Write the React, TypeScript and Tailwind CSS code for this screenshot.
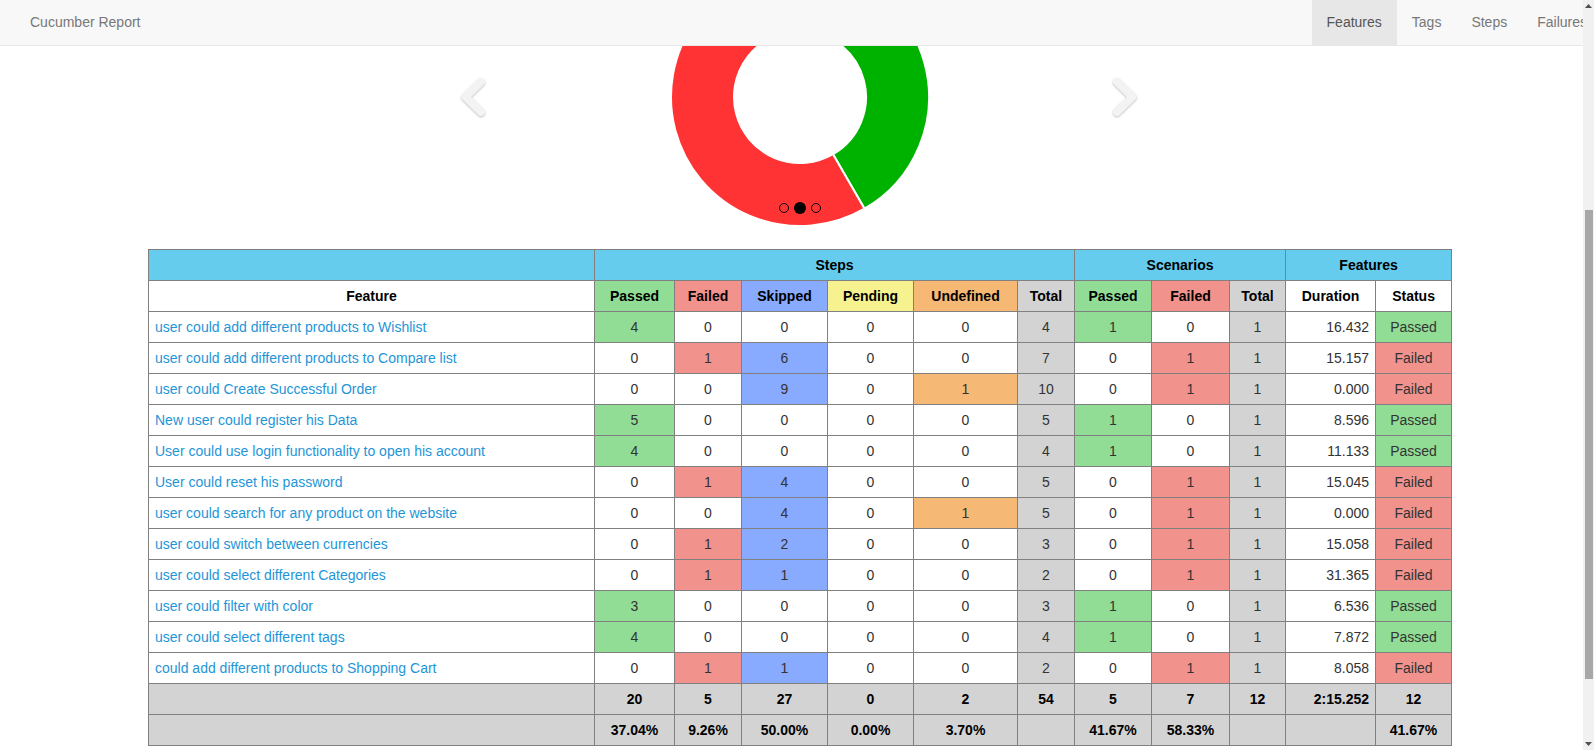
import React from "react";

type Row = {
  name: string;
  steps: number[];
  scenarios: number[];
  duration: string;
  status: "Passed" | "Failed";
};

const rows: Row[] = [
  { name: "user could add different products to Wishlist", steps: [4, 0, 0, 0, 0, 4], scenarios: [1, 0, 1], duration: "16.432", status: "Passed" },
  { name: "user could add different products to Compare list", steps: [0, 1, 6, 0, 0, 7], scenarios: [0, 1, 1], duration: "15.157", status: "Failed" },
  { name: "user could Create Successful Order", steps: [0, 0, 9, 0, 1, 10], scenarios: [0, 1, 1], duration: "0.000", status: "Failed" },
  { name: "New user could register his Data", steps: [5, 0, 0, 0, 0, 5], scenarios: [1, 0, 1], duration: "8.596", status: "Passed" },
  { name: "User could use login functionality to open his account", steps: [4, 0, 0, 0, 0, 4], scenarios: [1, 0, 1], duration: "11.133", status: "Passed" },
  { name: "User could reset his password", steps: [0, 1, 4, 0, 0, 5], scenarios: [0, 1, 1], duration: "15.045", status: "Failed" },
  { name: "user could search for any product on the website", steps: [0, 0, 4, 0, 1, 5], scenarios: [0, 1, 1], duration: "0.000", status: "Failed" },
  { name: "user could switch between currencies", steps: [0, 1, 2, 0, 0, 3], scenarios: [0, 1, 1], duration: "15.058", status: "Failed" },
  { name: "user could select different Categories", steps: [0, 1, 1, 0, 0, 2], scenarios: [0, 1, 1], duration: "31.365", status: "Failed" },
  { name: "user could filter with color", steps: [3, 0, 0, 0, 0, 3], scenarios: [1, 0, 1], duration: "6.536", status: "Passed" },
  { name: "user could select different tags", steps: [4, 0, 0, 0, 0, 4], scenarios: [1, 0, 1], duration: "7.872", status: "Passed" },
  { name: "could add different products to Shopping Cart", steps: [0, 1, 1, 0, 0, 2], scenarios: [0, 1, 1], duration: "8.058", status: "Failed" },
];

// colour per step column, used only when the count is above zero
const stepColors = ["bg-[#92dd96]", "bg-[#f2928c]", "bg-[#88aaff]", "bg-[#f5f28f]", "bg-[#f5b975]"];
const scenarioColors = ["bg-[#92dd96]", "bg-[#f2928c]"];

const cell = "border border-[#808080] h-[31px] px-[5px] text-center";
const head = "border border-[#808080] h-[31px] px-[5px] text-center font-bold text-black";
const foot = "border border-[#808080] h-[31px] px-[5px] text-center font-bold text-black bg-[#d3d3d3]";

const colWidths = [446, 80, 67, 86, 86, 104, 57, 77, 78, 56, 90, 76];

function Chevron({ dir }: { dir: "left" | "right" }) {
  const pts = dir === "left" ? "25,10 9.5,25 25,40" : "9,10 24.5,25 9,40";
  return (
    <svg
      width="34"
      height="50"
      viewBox="0 0 34 50"
      className={`absolute top-[26px] ${dir === "left" ? "left-[456px]" : "left-[1108px]"} drop-shadow-[0_1px_1px_rgba(0,0,0,0.25)]`}
    >
      <polyline points={pts} fill="none" stroke="#f3f3f3" strokeWidth="8" strokeLinecap="round" strokeLinejoin="round" />
    </svg>
  );
}

function Donut() {
  return (
    <svg width="260" height="260" viewBox="0 0 260 260" className="block ml-[670px] mt-[-79px]">
      <path
        d="M130 1 A129 129 0 0 1 194.5 241.72 L163 187.16 A66 66 0 0 0 130 64 Z"
        fill="#00b200"
        stroke="#fff"
        strokeWidth="2"
      />
      <path
        d="M194.5 241.72 A129 129 0 1 1 130 1 L130 64 A66 66 0 1 0 163 187.16 Z"
        fill="#ff3333"
        stroke="#fff"
        strokeWidth="2"
      />
    </svg>
  );
}

export default function App() {
  return (
    <div className="flex h-[750px] w-full overflow-hidden bg-white font-['Liberation_Sans',Arial,sans-serif] text-[14px] text-[#333]">
      <div className="flex min-w-0 flex-1 flex-col overflow-hidden">
        {/* navbar */}
        <nav className="flex h-[46px] shrink-0 overflow-hidden border-b border-[#e7e7e7] bg-[#f8f8f8] text-[#777]">
          <span className="flex items-center pl-[30px]">Cucumber Report</span>
          <ul className="ml-auto mr-[-19px] flex shrink-0">
            <li className="flex items-center bg-[#e7e7e7] px-[15px] text-[#555]">Features</li>
            <li className="flex items-center px-[15px]">Tags</li>
            <li className="flex items-center px-[15px]">Steps</li>
            <li className="flex items-center px-[15px]">Failures</li>
          </ul>
        </nav>

        {/* chart carousel */}
        <div className="relative h-[203px] shrink-0 overflow-hidden">
          <Donut />
          <Chevron dir="left" />
          <Chevron dir="right" />
          <div className="absolute left-[779px] top-[156px] flex items-center gap-[5px]">
            <span className="h-[10px] w-[10px] rounded-full border border-black" />
            <span className="h-[12px] w-[12px] rounded-full bg-black" />
            <span className="h-[10px] w-[10px] rounded-full border border-black" />
          </div>
        </div>

        {/* features table */}
        <table className="ml-[148px] w-[1304px] shrink-0 table-fixed border-collapse">
          <colgroup>
            {colWidths.map((w, i) => (
              <col key={i} style={{ width: w }} />
            ))}
          </colgroup>
          <thead>
            <tr className="bg-[#66ccee]">
              <th className={head}></th>
              <th className={head} colSpan={6}>Steps</th>
              <th className={head} colSpan={3}>Scenarios</th>
              <th className={head} colSpan={2}>Features</th>
            </tr>
            <tr>
              <th className={head}>Feature</th>
              <th className={`${head} bg-[#92dd96]`}>Passed</th>
              <th className={`${head} bg-[#f2928c]`}>Failed</th>
              <th className={`${head} bg-[#88aaff]`}>Skipped</th>
              <th className={`${head} bg-[#f5f28f]`}>Pending</th>
              <th className={`${head} bg-[#f5b975]`}>Undefined</th>
              <th className={`${head} bg-[#d3d3d3]`}>Total</th>
              <th className={`${head} bg-[#92dd96]`}>Passed</th>
              <th className={`${head} bg-[#f2928c]`}>Failed</th>
              <th className={`${head} bg-[#d3d3d3]`}>Total</th>
              <th className={head}>Duration</th>
              <th className={head}>Status</th>
            </tr>
          </thead>
          <tbody>
            {rows.map((r) => (
              <tr key={r.name}>
                <td className="border border-[#808080] h-[31px] pl-[6px] text-left text-[#1e95d8]">{r.name}</td>
                {r.steps.map((v, i) => (
                  <td key={i} className={`${cell} ${i === 5 ? "bg-[#d3d3d3]" : v > 0 ? stepColors[i] : ""}`}>
                    {v}
                  </td>
                ))}
                {r.scenarios.map((v, i) => (
                  <td key={i} className={`${cell} ${i === 2 ? "bg-[#d3d3d3]" : v > 0 ? scenarioColors[i] : ""}`}>
                    {v}
                  </td>
                ))}
                <td className="border border-[#808080] h-[31px] pr-[6px] text-right">{r.duration}</td>
                <td className={`${cell} ${r.status === "Passed" ? "bg-[#92dd96]" : "bg-[#f2928c]"}`}>{r.status}</td>
              </tr>
            ))}
          </tbody>
          <tfoot>
            <tr>
              <td className={foot}></td>
              {["20", "5", "27", "0", "2", "54", "5", "7", "12"].map((v, i) => (
                <td key={i} className={foot}>{v}</td>
              ))}
              <td className={`${foot} !text-right !pr-[6px]`}>2:15.252</td>
              <td className={foot}>12</td>
            </tr>
            <tr>
              <td className={foot}></td>
              {["37.04%", "9.26%", "50.00%", "0.00%", "3.70%", "", "41.67%", "58.33%", "", "", "41.67%"].map((v, i) => (
                <td key={i} className={foot}>{v}</td>
              ))}
            </tr>
          </tfoot>
        </table>
      </div>

      {/* browser scrollbar */}
      <div className="flex w-[11px] shrink-0 flex-col bg-[#f1f1f1]">
        <div className="flex h-[12px] items-center justify-center">
          <svg width="7" height="4" viewBox="0 0 7 4"><polygon points="3.5,0 7,4 0,4" fill="#505050" /></svg>
        </div>
        <div className="flex-1">
          <div className="ml-[2px] mt-[198px] h-[469px] w-[8px] bg-[#a8a8a8]" />
        </div>
        <div className="flex h-[12px] items-center justify-center">
          <svg width="7" height="4" viewBox="0 0 7 4"><polygon points="0,0 7,0 3.5,4" fill="#505050" /></svg>
        </div>
      </div>
    </div>
  );
}
